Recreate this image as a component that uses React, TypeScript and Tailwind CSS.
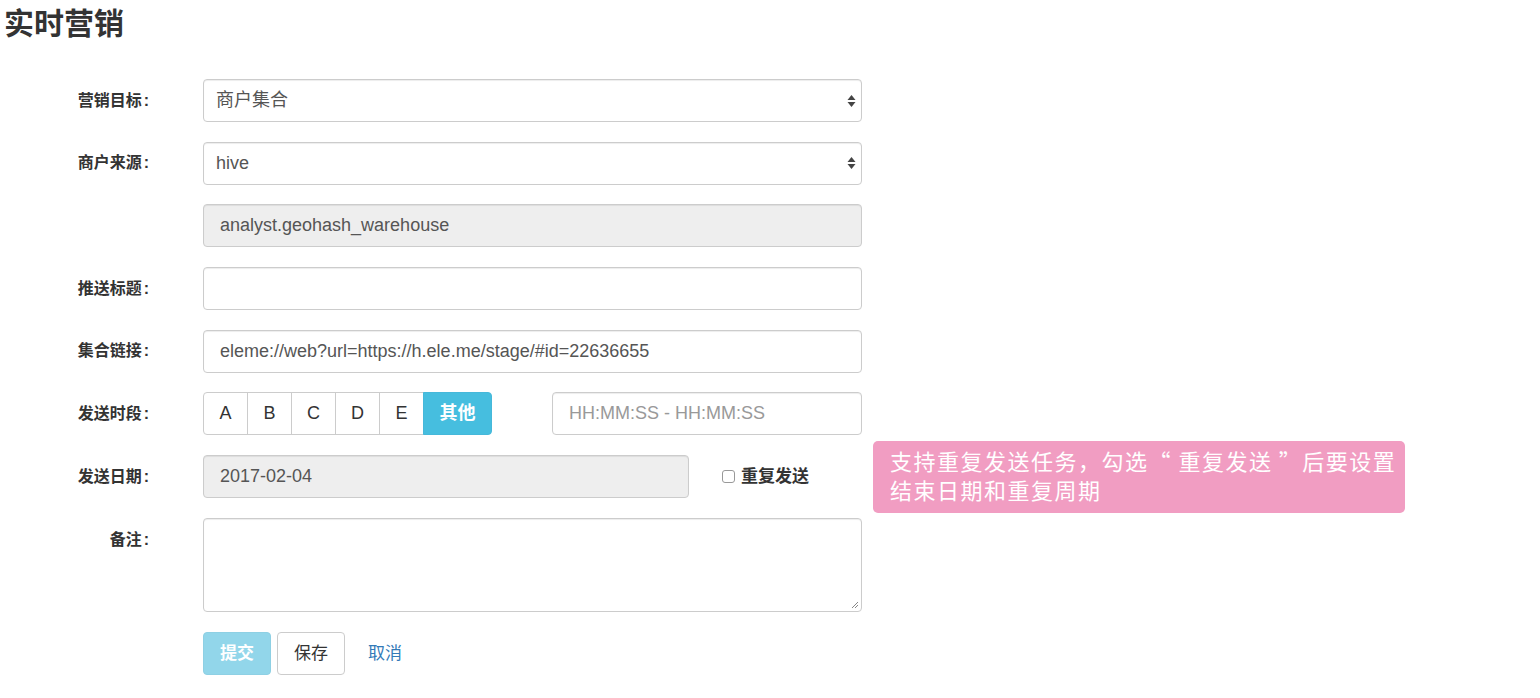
import React from 'react';

const font = { fontFamily: '"Liberation Sans", "Noto Sans CJK SC", sans-serif' };

const Label: React.FC<{ text: string; top?: boolean }> = ({ text, top }) => (
  <div className={`w-[152px] shrink-0 text-right text-[16px] font-bold text-[#333] ${top ? 'pt-[10px]' : 'self-center'}`}>
    {text}
    <span className="ml-[2px] mr-[3px]">:</span>
  </div>
);

const SelectArrows = () => (
  <svg width="9" height="14" viewBox="0 0 9 14" className="absolute right-[5px] top-1/2 -translate-y-1/2">
    <path d="M4.5 1 L8.5 6 H0.5 Z" fill="#444" />
    <path d="M4.5 13 L8.5 8 H0.5 Z" fill="#444" />
  </svg>
);

const inputBase = 'h-[43px] rounded-[4px] border border-[#ccc] shadow-[inset_0_1px_1px_rgba(0,0,0,0.075)] text-[18px] text-[#555] flex items-center';

const App: React.FC = () => {
  const slots = ['A', 'B', 'C', 'D', 'E'];

  return (
    <div className="w-[1540px] h-[698px] bg-white relative overflow-hidden" style={font}>
      <h1 className="pl-[4px] pt-[6px] text-[30px] leading-[36px] font-semibold text-[#333]">实时营销</h1>

      <div className="mt-[37px] flex flex-col gap-[19.7px]">
        <div className="flex">
          <Label text="营销目标" />
          <div className={`${inputBase} relative ml-[51px] w-[659px] pl-[12px] bg-white`}>
            商户集合
            <SelectArrows />
          </div>
        </div>

        <div className="flex">
          <Label text="商户来源" />
          <div className={`${inputBase} relative ml-[51px] w-[659px] pl-[12px] bg-white`}>
            hive
            <SelectArrows />
          </div>
        </div>

        <div className="flex">
          <div className="w-[152px] shrink-0" />
          <div className={`${inputBase} ml-[51px] w-[659px] pl-[16px] bg-[#eee]`}>analyst.geohash_warehouse</div>
        </div>

        <div className="flex">
          <Label text="推送标题" />
          <div className={`${inputBase} ml-[51px] w-[659px] pl-[16px] bg-white`} />
        </div>

        <div className="flex">
          <Label text="集合链接" />
          <div className={`${inputBase} ml-[51px] w-[659px] pl-[16px] bg-white`}>
            eleme://web?url=https://h.ele.me/stage/#id=22636655
          </div>
        </div>

        <div className="flex">
          <Label text="发送时段" />
          <div className="ml-[51px] flex h-[43px]">
            {slots.map((s, i) => (
              <div
                key={s}
                className={`w-[45px] flex items-center justify-center border border-[#ccc] bg-white text-[18px] text-[#333] ${i === 0 ? 'rounded-l-[4px]' : '-ml-px'}`}
              >
                {s}
              </div>
            ))}
            <div className="-ml-px w-[69px] flex items-center justify-center rounded-r-[4px] border border-[#46b8da] bg-[#46bedf] text-[18px] font-bold text-white">
              其他
            </div>
          </div>
          <div className={`${inputBase} ml-[60px] w-[310px] pl-[16px] bg-white text-[#999]`}>HH:MM:SS - HH:MM:SS</div>
        </div>

        <div className="flex">
          <Label text="发送日期" />
          <div className={`${inputBase} ml-[51px] w-[486px] pl-[16px] bg-[#eee]`}>2017-02-04</div>
          <label className="ml-[33px] flex items-center gap-[6px] text-[17px] font-bold text-[#333]">
            <span className="w-[13px] h-[13px] rounded-[3px] border border-[#999] bg-white" />
            重复发送
          </label>
        </div>

        <div className="flex">
          <Label text="备注" top />
          <div className="relative ml-[51px] w-[659px] h-[94px] rounded-[4px] border border-[#ccc] bg-white shadow-[inset_0_1px_1px_rgba(0,0,0,0.075)]">
            <svg width="8" height="8" viewBox="0 0 8 8" className="absolute right-[2px] bottom-[2px]">
              <path d="M7 1 L1 7 M7 4 L4 7" stroke="#888" strokeWidth="1" />
            </svg>
          </div>
        </div>
      </div>

      <div className="mt-[20px] ml-[203px] flex items-center">
        <div className="w-[68px] h-[43px] flex items-center justify-center rounded-[4px] border border-[#8ed0e4] bg-[#92d6ea] text-[17px] font-bold text-white">
          提交
        </div>
        <div className="ml-[6px] w-[68px] h-[43px] flex items-center justify-center rounded-[4px] border border-[#ccc] bg-white text-[17px] text-[#333]">
          保存
        </div>
        <div className="ml-[23px] text-[17px] text-[#337ab7]">取消</div>
      </div>

      <div
        className="absolute left-[873px] top-[441px] w-[532px] h-[72px] rounded-[5px] bg-[#f19dc2] pl-[17px] pt-[5px] text-[22px] leading-[29px] tracking-[1.5px] text-white"
        style={{ fontFamily: '"Noto Sans CJK SC", sans-serif' }}
      >
        支持重复发送任务，勾选“ 重复发送 ”后要设置
        <br />
        结束日期和重复周期
      </div>
    </div>
  );
};

export default App;
